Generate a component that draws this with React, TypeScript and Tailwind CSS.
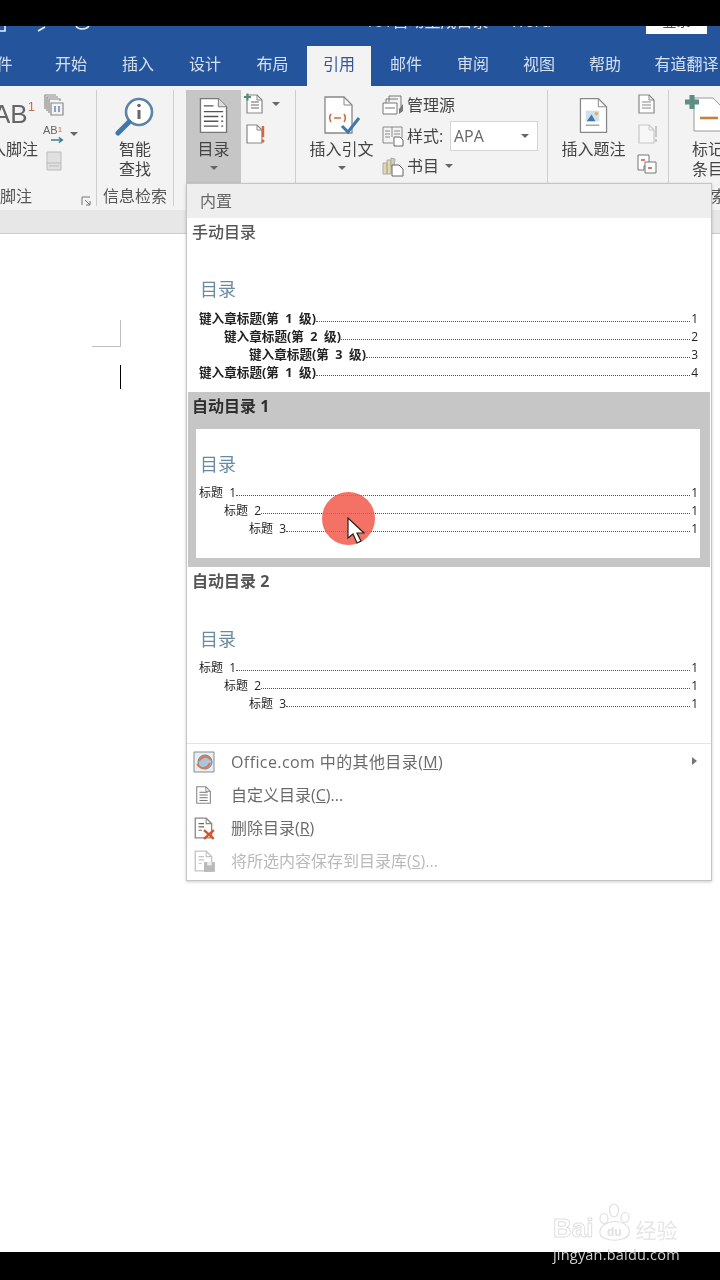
import React from 'react';

const tabs = [
  { label: '文件', cls: 'w-[67px] ml-[-37px] mr-[8px]' },
  { label: '开始', cls: 'w-[66px]' },
  { label: '插入', cls: 'w-[68px]' },
  { label: '设计', cls: 'w-[66px]' },
  { label: '布局', cls: 'w-[69px]' },
  { label: '引用', cls: 'w-[64px] bg-[#f3f3f3] text-[#33589a]' },
  { label: '邮件', cls: 'w-[70px]' },
  { label: '审阅', cls: 'w-[64px]' },
  { label: '视图', cls: 'w-[68px]' },
  { label: '帮助', cls: 'w-[64px]' },
  { label: '有道翻译', cls: 'w-[99px]' },
];

const Caret = () => <span className="block w-0 h-0 border-x-[4px] border-x-transparent border-t-[4px] border-t-[#666]" />;

const DocLines = ({ className = 'w-[30px] h-[38px]' }: { className?: string }) => (
  <svg viewBox="0 0 30 38" className={className} fill="none">
    <path d="M1.5 1.5H20L28.5 10V36.5H1.5Z" fill="#fff" stroke="#777" strokeWidth="1.4" />
    <path d="M20 1.5V10H28.5" fill="#ddd" stroke="#777" />
    <path d="M5 9H15M5 15H25M5 20H20M23 20H25M5 25H20M23 25H25M5 30H20M23 30H25" stroke="#555" strokeWidth="1.4" />
  </svg>
);

const Paper = ({ children, className = 'w-[22px] h-[22px]' }: { children?: React.ReactNode; className?: string }) => (
  <svg viewBox="0 0 22 22" className={className} fill="none">
    <path d="M3 2H13L18 7V20H3Z" fill="#fff" stroke="#888" strokeWidth="1.2" />
    <path d="M13 2V7H18" stroke="#888" />
    {children}
  </svg>
);

const TocRow = ({ indent, label, page, bold }: { indent: string; label: string; page: string; bold?: boolean }) => (
  <div className={`flex items-center h-[18px] text-[#222] ${bold ? 'text-[12.6px]' : 'text-[12px]'} ${indent}`}>
    <span className={`whitespace-pre ${bold ? 'font-bold' : ''}`}>{label}</span>
    <span className="flex-1 mt-[5px] border-b border-dotted border-[#555]" />
    <span className="ml-px text-[12px]">{page}</span>
  </div>
);

const TocTitle = ({ className }: { className: string }) => (
  <div className={`h-[24px] leading-[24px] text-[18px] text-[#6a8aa0] ${className}`}>目录</div>
);

const MenuItem = ({ icon, children, muted }: { icon: React.ReactNode; children: React.ReactNode; muted?: boolean }) => (
  <div className={`flex items-center h-[33px] text-[16px] ${muted ? 'text-[#b9b9b9]' : 'text-[#6a6a6a]'}`}>
    <span className="w-[34px] mr-[10px] flex justify-center">{icon}</span>
    <span className="flex-1 whitespace-pre">{children}</span>
  </div>
);

const GroupLabel = ({ children, className = '' }: { children: React.ReactNode; className?: string }) => (
  <div className={`absolute bottom-0 text-[16px] leading-[20px] text-[#555] whitespace-nowrap ${className}`}>{children}</div>
);

const App: React.FC = () => {
  return (
    <div className="relative w-[720px] h-[1280px] overflow-hidden bg-white flex flex-col font-['Open_Sans','Noto_Sans_CJK_SC',sans-serif] blur-[0.35px]">
      <div className="h-[26px] bg-black shrink-0" />

      {/* title bar, cut by the black band */}
      <div className="relative h-[20px] shrink-0 overflow-hidden bg-[#24559c] text-[#d7e1ef]">
        <div className="flex items-start h-full">
          <svg viewBox="0 0 100 10" className="w-[100px] h-[10px]" fill="none" stroke="#e8eef7" strokeWidth="1.6">
            <path d="M0 5H5V0M38 5L45 1M76 0C78 4 86 4 89 0" />
          </svg>
          <div className="w-[281px] ml-[265px] mt-[-15px] text-[16px] leading-[20px] whitespace-pre">101自动生成目录  -  Word</div>
          <div className="w-[61px] h-[8px] bg-white overflow-hidden">
            <div className="mt-[-15px] text-center text-[14px] leading-[20px] text-[#555]">登录</div>
          </div>
        </div>
      </div>

      <div className="flex h-[40px] shrink-0 bg-[#24559c] text-[16px] text-[#d5e0f0]">
        {tabs.map((t) => (
          <div key={t.label} className={`shrink-0 flex items-center justify-center pb-[4px] ${t.cls}`}>{t.label}</div>
        ))}
      </div>

      {/* ribbon */}
      <div className="flex h-[124px] shrink-0 bg-[#f3f3f3] pt-[4px] text-[16px] text-[#444]">
        {/* footnotes */}
        <div className="relative w-[97px] h-[116px] shrink-0 border-r border-[#cfcfcf] overflow-hidden flex">
          <div className="w-[44px] shrink-0 ml-[-8px] flex flex-col items-center">
            <div className="mt-[9px] h-[34px] flex items-start font-['Liberation_Sans',sans-serif] text-[26px] leading-[30px] text-[#666]">
              AB<span className="text-[13px] leading-[16px] text-[#c8704a]">1</span>
            </div>
            <div className="mt-[6px] leading-[20px] whitespace-nowrap">入脚注</div>
          </div>
          <div className="ml-[7px] flex flex-col gap-[6px] items-start">
            <svg viewBox="0 0 22 24" className="w-[22px] h-[24px] mt-[3px]" fill="none" stroke="#8a8a8a" strokeWidth="1.2">
              <path d="M2 16V2H13M4 18V4H15M6 20V6H17V8M8 10V22H20V10Z" />
              <path d="M12 13V19M16 13V19" stroke="#4a6f96" />
            </svg>
            <div className="flex items-center gap-[5px]">
              <div className="relative w-[22px] h-[22px] font-['Liberation_Sans',sans-serif] text-[11px] leading-[14px] text-[#666]">
                AB<span className="text-[8px] align-top text-[#c8704a]">1</span>
                <svg viewBox="0 0 16 8" className="absolute left-[8px] top-[13px] w-[14px] h-[8px]" fill="none" stroke="#3f7f8f" strokeWidth="1.6">
                  <path d="M0 4H13M9 1L13 4L9 7" />
                </svg>
              </div>
              <Caret />
            </div>
            <svg viewBox="0 0 16 20" className="w-[16px] h-[20px] ml-[3px]" fill="#e0e0e0" stroke="#bbb">
              <path d="M1 1H15V19H1Z" />
              <path d="M1 12H15M3 15H13" />
            </svg>
          </div>
          <GroupLabel className="left-0">脚注</GroupLabel>
          <svg viewBox="0 0 10 10" className="absolute right-[5px] bottom-0 w-[10px] h-[10px]" fill="none" stroke="#777">
            <path d="M1 9V1H9M4 4L9 9M9 5V9H5" />
          </svg>
        </div>

        {/* research */}
        <div className="relative w-[77px] h-[116px] shrink-0 border-r border-[#cfcfcf] flex flex-col items-center">
          <svg viewBox="0 0 40 40" className="w-[40px] h-[40px] mt-[6px]" fill="none">
            <circle cx="24" cy="16" r="13" fill="#fff" stroke="#5b83a8" strokeWidth="2.6" />
            <path d="M14 26L3 37" stroke="#3f79ab" strokeWidth="5" strokeLinecap="round" />
            <circle cx="24" cy="9.5" r="1.8" fill="#666" />
            <path d="M24 14V23" stroke="#666" strokeWidth="3" />
          </svg>
          <div className="mt-[3px] leading-[20px] text-center">智能<br />查找</div>
          <GroupLabel>信息检索</GroupLabel>
        </div>

        {/* table of contents */}
        <div className="relative w-[122px] h-[116px] shrink-0 border-r border-[#cfcfcf] flex">
          <div className="ml-[12px] w-[55px] h-[93px] shrink-0 bg-[#c6c6c6] flex flex-col items-center">
            <DocLines className="w-[29px] h-[37px] mt-[7px]" />
            <div className="mt-[5px] leading-[20px]">目录</div>
            <div className="mt-[7px]"><Caret /></div>
          </div>
          <div className="ml-[3px] flex flex-col gap-[8px] mt-[3px]">
            <div className="flex items-center gap-[6px]">
              <Paper><path d="M7 9H15M7 12H15M7 15H15" stroke="#666" /><path d="M0 4H7M3.5 0.5V7.5" stroke="#4f8f6f" strokeWidth="2" /></Paper>
              <Caret />
            </div>
            <Paper>
              <path d="M19 3V14" stroke="#d2693c" strokeWidth="2.4" />
              <circle cx="19" cy="18" r="1.5" fill="#d2693c" />
            </Paper>
          </div>
        </div>

        {/* citations */}
        <div className="relative w-[252px] h-[116px] shrink-0 border-r border-[#cfcfcf] flex">
          <div className="w-[86px] shrink-0 flex flex-col items-center pl-[5px]">
            <svg viewBox="0 0 38 40" className="w-[38px] h-[40px] mt-[6px]" fill="none">
              <path d="M2 1H21L29 9V37H2Z" fill="#fff" stroke="#888" strokeWidth="1.3" />
              <path d="M21 1V9H29" stroke="#888" />
              <path d="M8 18C6 21 6 23 8 26M21 18C23 21 23 23 21 26M11 22H18" stroke="#c8704a" strokeWidth="1.6" />
              <path d="M19 30L25 36L36 22" stroke="#3f79ab" strokeWidth="3" />
            </svg>
            <div className="mt-[3px] leading-[20px] whitespace-nowrap">插入引文</div>
            <div className="mt-[7px]"><Caret /></div>
          </div>
          <div className="flex flex-col">
            <div className="flex items-center h-[30px]">
              <svg viewBox="0 0 22 22" className="w-[22px] h-[22px]" fill="none" stroke="#777">
                <path d="M7 8V2H19V13M4 11V5H16" />
                <path d="M1 9H15V20H1Z" fill="#fff" />
                <path d="M3 14H13" />
                <path d="M17 15L21 10V17L17 20Z" fill="#777" stroke="none" />
              </svg>
              <span className="ml-[3px]">管理源</span>
            </div>
            <div className="flex items-center h-[31px]">
              <svg viewBox="0 0 22 22" className="w-[22px] h-[22px]" fill="none" stroke="#888">
                <path d="M1 2H20V13M1 2V18H11" />
                <path d="M10 2V12M3 6H8M3 9H8M3 12H8M12 6H18M12 9H18" />
                <path d="M12 12H18L21 15V21H12Z" fill="#fff" stroke="#666" />
              </svg>
              <span className="ml-[3px] w-[43px]">样式:</span>
              <div className="w-[88px] h-[30px] bg-white border border-[#d5d5d5] flex items-center justify-between pl-[3px] pr-[8px] text-[#666]">
                APA <Caret />
              </div>
            </div>
            <div className="flex items-center h-[30px]">
              <svg viewBox="0 0 22 22" className="w-[22px] h-[22px]" fill="none" stroke="#aaa">
                <path d="M1 8H5V19H1ZM5 5H9V19H5Z" fill="#e3d9a6" />
                <path d="M9 3L13 4L12 12H9Z" fill="#cfd7a0" />
                <path d="M10 10H17L21 14V21H10Z" fill="#fff" stroke="#666" />
              </svg>
              <span className="ml-[3px] mr-[6px]">书目</span>
              <Caret />
            </div>
          </div>
        </div>

        {/* captions */}
        <div className="relative w-[121px] h-[116px] shrink-0 border-r border-[#cfcfcf] flex">
          <div className="w-[88px] shrink-0 flex flex-col items-center pl-[3px]">
            <svg viewBox="0 0 30 38" className="w-[29px] h-[37px] mt-[7px]" fill="none">
              <path d="M1.5 1.5H20L28.5 10V36.5H1.5Z" fill="#fff" stroke="#888" strokeWidth="1.3" />
              <path d="M20 1.5V10H28.5" stroke="#888" />
              <path d="M7 14H21V25H7Z" fill="#cfe0ef" />
              <path d="M8 25L13 18L17 25" fill="#3f79ab" />
              <circle cx="18" cy="17" r="2" fill="#e0b84f" />
              <path d="M7 29H21" stroke="#777" />
            </svg>
            <div className="mt-[5px] leading-[20px] whitespace-nowrap">插入题注</div>
          </div>
          <div className="flex flex-col gap-[8px] mt-[3px]">
            <Paper><path d="M6 9H15M6 12H15M6 15H15" stroke="#888" /></Paper>
            <Paper className="w-[22px] h-[22px] opacity-40"><path d="M20 3V14M20 16V19" stroke="#888" strokeWidth="2" /></Paper>
            <svg viewBox="0 0 22 22" className="w-[22px] h-[22px]" fill="none" stroke="#777">
              <path d="M2 2H13V13H8V17H2Z" fill="#fff" />
              <path d="M9 9H20V20H9Z" fill="#fff" />
              <path d="M5 7H9M12 15H16" stroke="#c8553c" strokeWidth="1.6" />
            </svg>
          </div>
        </div>

        {/* index */}
        <div className="relative flex-1 h-[116px] overflow-hidden">
          <svg viewBox="0 0 36 40" className="absolute left-[16px] top-[4px] w-[36px] h-[40px]" fill="none">
            <path d="M9 4H28L36 12V37H9Z" fill="#fff" stroke="#999" />
            <path d="M15 24H33" stroke="#c8803f" strokeWidth="2.6" />
            <path d="M0 8H14M7 1V15" stroke="#5b8f84" strokeWidth="5" />
          </svg>
          <div className="absolute left-[23px] top-[49px] leading-[20px] whitespace-nowrap">标记<br />条目</div>
          <GroupLabel className="left-[42px]">索</GroupLabel>
        </div>
      </div>

      <div className="h-[24px] shrink-0 bg-[#e7e7e7] border-b border-[#cccccc]" />

      {/* document */}
      <div className="flex-1">
        <div className="ml-[92px] mt-[86px] w-[29px] h-[27px] border-r border-b border-[#bdbdbd]" />
        <div className="ml-[120px] mt-[18px] w-px h-[24px] bg-black" />
      </div>

      <div className="h-[28px] shrink-0 bg-black" />

      {/* 目录 dropdown */}
      <div className="absolute left-[186px] top-[183px] w-[526px] h-[698px] bg-white border border-[#c4c4c4] shadow-[0_1px_3px_rgba(0,0,0,0.2)] text-[16px]">
        <div className="h-[34px] bg-[#eeeeee] pl-[13px] flex items-center text-[#666]">内置</div>

        <div className="h-[174px] mx-[1px]">
          <div className="h-[28px] pl-[4px] leading-[28px] font-medium text-[#555]">手动目录</div>
          <div className="ml-[8px] mr-[10px] pl-[4px] pr-[2px] pt-[31px]">
            <TocTitle className="mb-[9px]" />
            <div className="ml-[-1px]">
              <TocRow indent="" label="键入章标题(第  1  级)" page="1" bold />
              <TocRow indent="pl-[25px]" label="键入章标题(第  2  级)" page="2" bold />
              <TocRow indent="pl-[50px]" label="键入章标题(第  3  级)" page="3" bold />
              <TocRow indent="" label="键入章标题(第  1  级)" page="4" bold />
            </div>
          </div>
        </div>

        <div className="h-[175px] mx-[1px] bg-[#c6c6c6]">
          <div className="h-[37px] pl-[4px] leading-[28px] font-bold text-[#2e2e2e]">自动目录 1</div>
          <div className="ml-[8px] mr-[10px] h-[129px] bg-white pl-[4px] pr-[2px] pt-[23px]">
            <TocTitle className="mb-[8px]" />
            <div className="ml-[-1px]">
              <TocRow indent="" label="标题  1" page="1" />
              <TocRow indent="pl-[25px]" label="标题  2" page="1" />
              <TocRow indent="pl-[50px]" label="标题  3" page="1" />
            </div>
          </div>
        </div>

        <div className="h-[176px] mx-[1px]">
          <div className="h-[28px] pl-[4px] leading-[28px] font-bold text-[#555]">自动目录 2</div>
          <div className="ml-[8px] mr-[10px] pl-[4px] pr-[2px] pt-[32px]">
            <TocTitle className="mb-[8px]" />
            <div className="ml-[-1px]">
              <TocRow indent="" label="标题  1" page="1" />
              <TocRow indent="pl-[25px]" label="标题  2" page="1" />
              <TocRow indent="pl-[50px]" label="标题  3" page="1" />
            </div>
          </div>
        </div>

        <div className="border-t border-[#e3e3e3] pt-[1px]">
          <div className="relative">
            <MenuItem
              icon={
                <svg viewBox="0 0 22 22" className="w-[22px] h-[22px]" fill="none">
                  <path d="M1 1H21V21H1Z" fill="#e9eef4" stroke="#8a8a8a" />
                  <circle cx="12" cy="11" r="7" fill="#a9c4dd" stroke="#5b83a8" />
                  <path d="M4 13C8 19 14 18 17 12M18 9C14 4 9 5 6 10" stroke="#d9793f" strokeWidth="1.8" />
                </svg>
              }
            >
              <span className="tracking-[0.4px]">Office.com 中的其他目录(<span className="underline">M</span>)</span>
            </MenuItem>
            <span className="absolute right-[14px] top-[12px] w-0 h-0 border-y-[4px] border-y-transparent border-l-[5px] border-l-[#777]" />
          </div>
          <MenuItem icon={<Paper className="w-[20px] h-[20px]"><path d="M6 8H15M6 11H15M6 14H15M6 17H15" stroke="#666" /></Paper>}>
            自定义目录(<span className="underline">C</span>)...
          </MenuItem>
          <MenuItem
            icon={
              <Paper className="w-[24px] h-[24px]">
                <path d="M6 7H11M6 10H11M6 13H9" stroke="#666" />
                <path d="M11 13L20 21M20 13L11 21" stroke="#d2552f" strokeWidth="2.2" />
              </Paper>
            }
          >
            删除目录(<span className="underline">R</span>)
          </MenuItem>
          <MenuItem
            muted
            icon={
              <Paper className="w-[24px] h-[24px] opacity-50">
                <path d="M6 7H11M6 10H11M6 13H9" stroke="#888" />
                <path d="M11 12H21V21H11Z" fill="#777" />
                <path d="M14 12H18V15H14Z" fill="#ddd" />
              </Paper>
            }
          >
            将所选内容保存到目录库(<span className="underline">S</span>)...
          </MenuItem>
        </div>
      </div>

      {/* click highlight and pointer from the recording */}
      <div className="absolute left-[322px] top-[492px] w-[53px] h-[53px] rounded-full bg-[#f2584a]/85" />
      <svg viewBox="0 0 18 28" className="absolute left-[347px] top-[517px] w-[18px] h-[28px]">
        <path d="M1 1V21L6 17L10 26L14 24L10 16H17Z" fill="#fff" stroke="#222" strokeWidth="1.2" />
      </svg>

      {/* baidu watermark */}
      <div className="absolute left-[553px] top-[1202px] w-[130px] h-[41px] flex items-end">
        <span className="font-['Liberation_Sans',sans-serif] font-bold text-[26px] leading-[30px] text-transparent [-webkit-text-stroke:1px_#e0e0e0]">Bai</span>
        <svg viewBox="0 0 40 40" className="w-[40px] h-[41px] ml-[2px] shrink-0" fill="none" stroke="#e0e0e0" strokeWidth="1.2">
          <ellipse cx="9" cy="16" rx="4" ry="5" />
          <ellipse cx="19" cy="8" rx="4.5" ry="6.5" />
          <ellipse cx="30" cy="15" rx="4" ry="5" />
          <path d="M5 31C4 23 13 19 20 19C28 19 36 24 34 31C32 40 7 40 5 31Z" />
          <text x="12" y="33" fontSize="12" fontWeight="700" fill="#e0e0e0" stroke="none" fontFamily="Liberation Sans">du</text>
        </svg>
        <span className="text-[21px] leading-[26px] text-[#e6e6e6] whitespace-nowrap">经验</span>
      </div>
      <div className="absolute left-[553px] top-[1245px] text-[14.5px] leading-[20px] tracking-[0.2px] text-[#d0d0d0]">jingyan.baidu.com</div>
    </div>
  );
};

export default App;
